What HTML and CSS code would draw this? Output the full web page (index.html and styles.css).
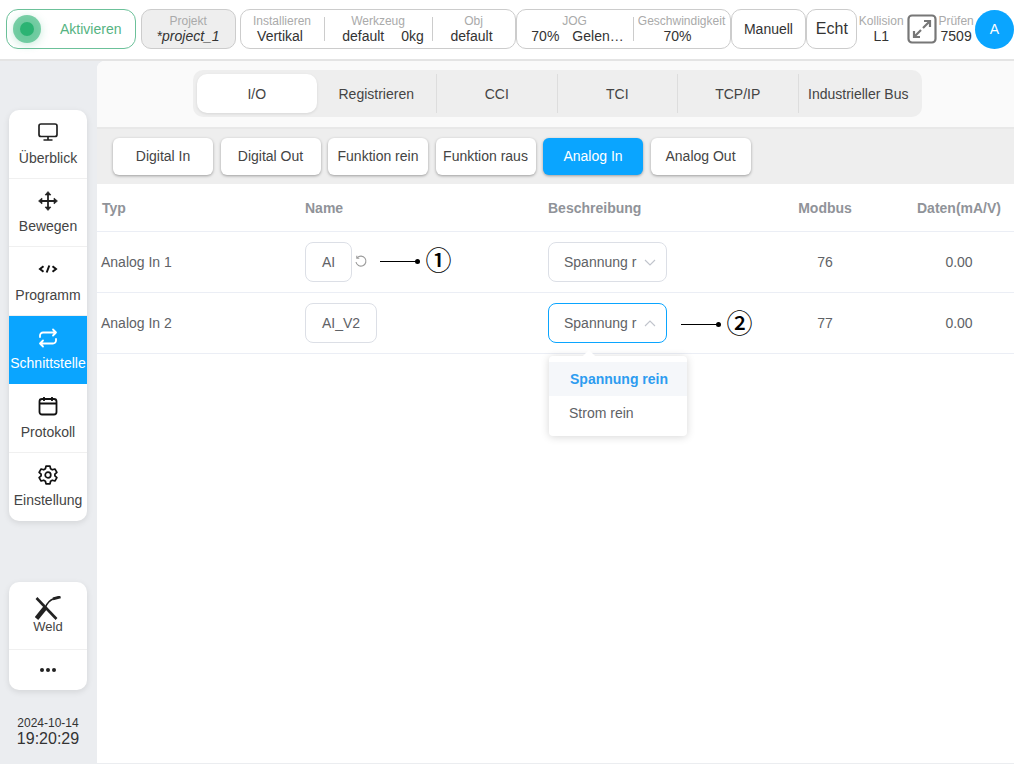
FILE: index.html
```html
<!DOCTYPE html>
<html lang="en">
<head>
  <meta charset="UTF-8">
  <title>Analog In</title>
  <link rel="stylesheet" href="styles.css">
</head>
<body>
  <header class="topbar">
    <button class="activate"><span class="activate-dot"></span><span class="activate-label">Aktivieren</span></button>
    <div class="box box-project">
      <div class="cell cell-project"><span class="cap">Projekt</span><em class="val">*project_1</em></div>
    </div>
    <div class="box box-install">
      <div class="cell cell-install"><span class="cap">Installieren</span><span class="val val-left">Vertikal</span></div>
      <div class="cell cell-tool"><span class="cap">Werkzeug</span><span class="val val-pair"><span>default</span><span>0kg</span></span></div>
      <div class="cell cell-obj"><span class="cap">Obj</span><span class="val val-left">default</span></div>
    </div>
    <div class="box box-jog">
      <div class="cell cell-jog"><span class="cap">JOG</span><span class="val val-pair val-tight"><span>70%</span><span>Gelen…</span></span></div>
      <div class="cell cell-speed"><span class="cap">Geschwindigkeit</span><span class="val val-left val-left-more">70%</span></div>
    </div>
    <div class="box box-mode">Manuell</div>
    <div class="box box-real">Echt</div>
    <div class="stat stat-coll"><span class="cap">Kollision</span><span class="val">L1</span></div>
    <svg class="expand" viewBox="0 0 30 30" fill="none" stroke="#777" stroke-width="2.2">
      <rect x="1.5" y="1.5" width="27" height="27" rx="3.5"/>
      <path d="M17 7h6v6M23 7l-7 7M13 23H7v-6M7 23l7-7"/>
    </svg>
    <div class="stat stat-check"><span class="cap">Prüfen</span><span class="val">7509</span></div>
    <div class="avatar">A</div>
  </header>

  <div class="layout">
    <aside class="sidebar">
      <nav class="menu">
        <a class="menu-item">
          <svg class="menu-icon" viewBox="0 0 20 20" fill="none" stroke="#222" stroke-width="1.7"><rect x="1" y="2" width="18" height="12.5" rx="2"/><path d="M10 14.5v3.5M5.500 18h9"/></svg>
          <span>Überblick</span>
        </a>
        <a class="menu-item">
          <svg class="menu-icon" viewBox="0 0 20 20" fill="#222" stroke="#222"><path d="M10 3v14M3 10h14" stroke-width="1.800"/><path d="M10 .5 13 4H7zM10 19.500 7 16h6zM.5 10 4 7v6zM19.500 10 16 13V7z" stroke-width=".6" stroke-linejoin="round"/></svg>
          <span>Bewegen</span>
        </a>
        <a class="menu-item">
          <svg class="menu-icon" viewBox="0 0 20 20" fill="none" stroke="#111" stroke-width="2"><path d="M5.500 7.200 2 10l3.500 2.800M14.500 7.200 18 10l-3.500 2.800M11.300 6.500l-2.600 7"/></svg>
          <span>Programm</span>
        </a>
        <a class="menu-item active">
          <svg class="menu-icon" viewBox="0 0 20 20" fill="none" stroke="#fff" stroke-width="1.800" stroke-linecap="round" stroke-linejoin="round"><path d="M2 9V7.500A3 3 0 0 1 5 4.500h13M15 1.500l3 3-3 3M18 11v1.500a3 3 0 0 1-3 3H2M5 18.500l-3-3 3-3"/></svg>
          <span>Schnittstelle</span>
        </a>
        <a class="menu-item">
          <svg class="menu-icon" viewBox="0 0 20 20" fill="none" stroke="#111" stroke-width="1.800"><rect x="1.500" y="3" width="17" height="15.500" rx="2.500"/><path d="M1.500 7.500h17M6 1v4M14 1v4"/></svg>
          <span>Protokoll</span>
        </a>
        <a class="menu-item">
          <svg class="menu-icon" viewBox="0 0 20 20" fill="none" stroke="#111" stroke-width="1.700" stroke-linejoin="round"><path d="M8 1.200h4l.6 2.600 1.700 1 2.600-.8 2 3.400-2 1.800v1.600l2 1.800-2 3.400-2.600-.8-1.700 1-.6 2.600H8l-.6-2.600-1.700-1-2.600.8-2-3.400 2-1.800V9.200l-2-1.800 2-3.400 2.600.8 1.700-1z"/><circle cx="10" cy="10" r="2.800"/></svg>
          <span>Einstellung</span>
        </a>
      </nav>

      <nav class="menu menu-weld">
        <a class="menu-item weld-item">
          <svg class="weld-icon" viewBox="0 0 26 24" fill="none" stroke="#222"><path d="M1.500 2 21.500 23" stroke-width="2.600"/><path d="M1.500 22.500 10 12" stroke-width="4.400"/><path d="M10 12C12 7 15 4 19 2.500" stroke-width="1.600"/><path d="M18 2.800l7.500-2" stroke-width="2.800"/></svg>
          <span>Weld</span>
        </a>
        <a class="menu-item more-item"><span class="dots"><i></i><i></i><i></i></span></a>
      </nav>

      <div class="clock"><span class="clock-date">2024-10-14</span><span class="clock-time">19:20:29</span></div>
    </aside>

    <main class="panel">
      <div class="tabs-wrap">
        <div class="tabs">
          <div class="tab selected">I/O</div>
          <div class="tab">Registrieren</div>
          <div class="tab sep">CCI</div>
          <div class="tab sep">TCI</div>
          <div class="tab sep">TCP/IP</div>
          <div class="tab sep">Industrieller Bus</div>
        </div>
      </div>

      <div class="subtabs">
        <button class="subtab">Digital In</button>
        <button class="subtab">Digital Out</button>
        <button class="subtab">Funktion rein</button>
        <button class="subtab">Funktion raus</button>
        <button class="subtab current">Analog In</button>
        <button class="subtab">Analog Out</button>
      </div>

      <div class="table">
        <div class="row row-head">
          <div class="head-first">Typ</div>
          <div>Name</div>
          <div>Beschreibung</div>
          <div class="center">Modbus</div>
          <div class="center">Daten(mA/V)</div>
        </div>
        <div class="row">
          <div class="type-cell">Analog In 1</div>
          <div class="name-cell">
            <span class="input input-short">AI</span>
            <svg class="reset" viewBox="0 0 14 14" fill="none" stroke="#999" stroke-width="1.100"><path d="M3.200 2.800A5 5 0 1 1 2 7"/><path d="M2.800 .8v2.500h2.500"/></svg>
            <span class="callout"><span class="callout-line"></span><span class="callout-num">①</span></span>
          </div>
          <div>
            <span class="select">Spannung r
              <svg class="chev" viewBox="0 0 12 7" fill="none" stroke="#c0c4cc" stroke-width="1.100"><path d="M1 1l5 5 5-5"/></svg>
            </span>
          </div>
          <div class="center">76</div>
          <div class="center">0.00</div>
        </div>
        <div class="row">
          <div class="type-cell">Analog In 2</div>
          <div class="name-cell"><span class="input input-long">AI_V2</span></div>
          <div class="select-cell">
            <span class="select open">Spannung r
              <svg class="chev" viewBox="0 0 12 7" fill="none" stroke="#c0c4cc" stroke-width="1.100"><path d="M1 6l5-5 5 5"/></svg>
            </span>
            <span class="callout callout-two"><span class="callout-line"></span><span class="callout-num">②</span></span>
            <div class="dropdown">
              <div class="option picked">Spannung rein</div>
              <div class="option">Strom rein</div>
            </div>
          </div>
          <div class="center">77</div>
          <div class="center">0.00</div>
        </div>
      </div>
    </main>
  </div>
</body>
</html>
```

FILE: styles.css
```css
* {
  box-sizing: border-box;
}

html, body {
  height: 100%;
}

body {
  margin: 0;
  width: 1014px;
  height: 764px;
  overflow: hidden;
  font-family: "Liberation Sans", Arial, sans-serif;
  font-size: 14px;
  color: #333;
  background: #ebedf0;
}

/* top bar */
.topbar {
  display: flex;
  align-items: center;
  height: 61px;
  padding: 0 0 1px 6px;
  background: #fff;
  border-bottom: 2px solid #e4e4e4;
}

.activate {
  display: flex;
  align-items: center;
  width: 130px;
  height: 40px;
  padding: 0 0 0 6px;
  margin-right: 5px;
  border: 1px solid #6cc19a;
  border-radius: 12px;
  background: #fff;
  font: inherit;
}

.activate-dot {
  width: 14px;
  height: 14px;
  margin: 0 7px;
  border-radius: 50%;
  background: #2bb373;
  box-shadow: 0 0 0 7px rgba(43, 179, 115, .6), 0 2px 8px 7px rgba(43, 179, 115, .25);
}

.activate-label {
  margin-left: 19px;
  color: #55b382;
}

.box {
  display: flex;
  align-items: center;
  justify-content: center;
  height: 40px;
  border: 1px solid #ccc;
  border-radius: 10px;
  background: #fff;
}

.box-project {
  width: 95px;
  margin-right: 4px;
  background: #eee;
}

.box-install {
  width: 276px;
  justify-content: flex-start;
}

.box-jog {
  width: 215px;
  justify-content: flex-start;
}

.box-mode {
  width: 76px;
}

.box-real {
  width: 51px;
  font-size: 16px;
}

.cell {
  display: flex;
  flex-direction: column;
  align-items: center;
  height: 24px;
  justify-content: center;
  border-left: 1px solid #ccc;
}

.cell:first-child {
  border-left: 0;
}

.cap {
  font-size: 12px;
  line-height: 14px;
  color: #aaa;
  white-space: nowrap;
}

.val {
  line-height: 16px;
  white-space: nowrap;
}

.val-left {
  margin-right: 4px;
}

.val-left-more {
  margin-right: 8px;
}

.val-pair {
  display: flex;
  justify-content: space-between;
  gap: 17px;
  margin-left: 10px;
}

.val-tight {
  gap: 13px;
  margin-left: 6px;
}

.cell-project .val {
  font-size: 14px;
}

.cell-install {
  width: 83px;
}

.cell-tool {
  width: 108px;
}

.cell-obj {
  width: 83px;
}

.cell-jog {
  width: 116px;
}

.cell-speed {
  width: 97px;
}

.stat {
  display: flex;
  flex-direction: column;
  align-items: center;
}

.stat-coll {
  width: 48px;
}

.stat-check {
  width: 38px;
}

.expand {
  width: 30px;
  height: 30px;
  margin: 0 0 0 2px;
  flex: none;
}

.avatar {
  display: flex;
  align-items: center;
  justify-content: center;
  width: 39px;
  height: 39px;
  border-radius: 50%;
  background: #0aa5ff;
  color: #fff;
}

/* sidebar */
.layout {
  display: flex;
  height: 703px;
}

.sidebar {
  display: flex;
  flex-direction: column;
  width: 97px;
  padding: 49px 0 0 9px;
}

.menu {
  display: flex;
  flex-direction: column;
  width: 78px;
  background: #fff;
  border-radius: 10px;
  overflow: hidden;
  box-shadow: 0 2px 6px rgba(0, 0, 0, .1);
}

.menu-item {
  display: flex;
  flex-direction: column;
  align-items: center;
  height: 68.500px;
  padding-top: 12px;
  border-bottom: 1px solid #f0f0f0;
  color: #444;
  white-space: nowrap;
}

.menu-item:last-child {
  border-bottom: 0;
}

.menu-item.active {
  background: #0aa5ff;
  color: #fff;
  border-bottom: 0;
}

.menu-icon {
  width: 20px;
  height: 20px;
  margin-bottom: 7.500px;
}

.menu-weld {
  margin-top: 61px;
}

.weld-item {
  height: 68px;
  padding-top: 14px;
  font-size: 13px;
  line-height: 14px;
}

.weld-icon {
  width: 26px;
  height: 24px;
  margin-bottom: 0;
}

.more-item {
  height: 40px;
  padding-top: 0;
  justify-content: center;
}

.dots {
  display: flex;
  gap: 2px;
}

.dots i {
  width: 4px;
  height: 4px;
  border-radius: 50%;
  background: #222;
}

.clock {
  display: flex;
  flex-direction: column;
  align-items: center;
  width: 78px;
  margin-top: 26px;
}

.clock-date {
  font-size: 12px;
  line-height: 14px;
}

.clock-time {
  font-size: 16px;
  line-height: 17px;
}

/* main panel */
.panel {
  flex: 1;
  margin-bottom: 1px;
  border-radius: 8px 0 0 0;
  background: #fff;
  overflow: hidden;
}

.tabs-wrap {
  height: 68px;
  padding: 9px 0 0 96px;
  background: #fafafa;
  border-bottom: 2px solid #e8e8e8;
}

.tabs {
  display: flex;
  align-items: center;
  width: 729px;
  height: 47px;
  padding: 0 4px;
  background: #eee;
  border-radius: 10px;
}

.tab {
  display: flex;
  flex: 1;
  align-items: center;
  justify-content: center;
  height: 39px;
  color: #444;
  white-space: nowrap;
}

.tab.sep {
  border-left: 1px solid #ddd;
}

.tab.selected {
  background: #fff;
  border-radius: 10px;
  box-shadow: 0 1px 3px rgba(0, 0, 0, .1);
}

.subtabs {
  display: flex;
  gap: 7.500px;
  height: 55px;
  padding: 9px 0 0 16px;
  background: #eee;
}

.subtab {
  width: 100px;
  height: 37px;
  padding: 0 0 2px;
  border: 0;
  border-radius: 6px;
  background: #fff;
  box-shadow: 0 1px 3px rgba(0, 0, 0, .35);
  font: inherit;
  color: #444;
  white-space: nowrap;
}

.subtab.current {
  background: #0aa5ff;
  color: #fff;
}

/* table */
.row {
  display: grid;
  grid-template-columns: 208px 243px 198px 158px 1fr;
  align-items: center;
  height: 61px;
  border-bottom: 1px solid #ebeef5;
  color: #606266;
}

.row-head {
  height: 48px;
  font-weight: bold;
  color: #909399;
}

.head-first {
  padding-left: 5px;
}

.type-cell {
  padding-left: 4px;
}

.center {
  text-align: center;
}

.name-cell {
  display: flex;
  align-items: center;
}

.input {
  display: flex;
  align-items: center;
  height: 40px;
  padding-left: 16px;
  border: 1px solid #dcdfe6;
  border-radius: 8px;
}

.input-short {
  width: 47px;
}

.input-long {
  width: 72px;
}

.reset {
  width: 14px;
  height: 14px;
  margin-left: 2px;
}

.callout {
  display: flex;
  align-items: center;
  flex: none;
  margin: -2px 0 0 12px;
  color: #000;
}

.callout-line {
  position: relative;
  width: 38px;
  height: 1px;
  background: #000;
}

.callout-line::after {
  content: '';
  position: absolute;
  right: -2px;
  top: -2px;
  width: 5px;
  height: 5px;
  border-radius: 50%;
  background: #000;
}

.callout-num {
  margin: 0 0 4px 7.500px;
  font-family: "Noto Sans CJK JP", "DejaVu Sans", sans-serif;
  font-size: 26px;
  font-weight: 500;
  line-height: 24px;
}

.select-cell {
  position: relative;
  display: flex;
  align-items: center;
}

.select {
  display: flex;
  align-items: center;
  flex: none;
  width: 119px;
  height: 40px;
  padding-left: 15px;
  border: 1px solid #dcdfe6;
  border-radius: 8px;
  white-space: nowrap;
}

.select.open {
  border-color: #0aa5ff;
}

.chev {
  width: 12px;
  height: 7px;
  margin-left: 8px;
}

.callout-two {
  margin: 2px 0 0 14px;
}

.dropdown {
  position: absolute;
  left: 1px;
  top: 53px;
  width: 138px;
  padding: 6px 0;
  background: #fff;
  border-radius: 4px;
  box-shadow: 0 1px 8px rgba(0, 0, 0, .16);
}

.dropdown::before {
  content: '';
  position: absolute;
  left: 35px;
  top: -4px;
  width: 10px;
  height: 10px;
  background: #fff;
  transform: rotate(45deg);
}

.option {
  position: relative;
  height: 34px;
  line-height: 34px;
  padding-left: 20px;
}

.option.picked {
  padding-left: 21px;
  background: #f5f7fa;
  color: #2d9cf0;
  font-weight: bold;
}
```
